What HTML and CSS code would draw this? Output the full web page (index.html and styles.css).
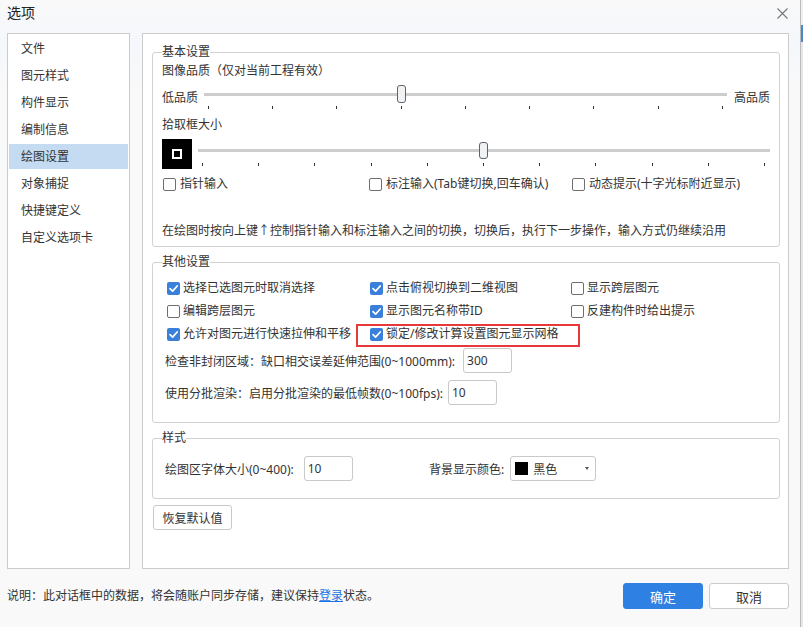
FILE: index.html
```html
<html lang="zh-CN">
<head>
    <meta charset="UTF-8">
    <meta name="viewport" content="width=device-width, initial-scale=1.0">
    <title>选项</title>
    <link rel="stylesheet" href="styles.css">
</head>
<body>
    <div class="dialog">
        <div class="titlebar">
            <span class="title">选项</span>
            <span class="close">
                <svg width="11" height="11" viewBox="0 0 11 11"><path d="M0.5 0.5 L10.5 10.5 M10.5 0.5 L0.5 10.5" stroke="#777" stroke-width="1.1" fill="none"/></svg>
            </span>
        </div>

        <div class="main">
            <ul class="nav">
                <li>文件</li>
                <li>图元样式</li>
                <li>构件显示</li>
                <li>编制信息</li>
                <li class="active">绘图设置</li>
                <li>对象捕捉</li>
                <li>快捷键定义</li>
                <li>自定义选项卡</li>
            </ul>

            <div class="content">
                <!-- 基本设置 -->
                <fieldset class="group basic">
                    <legend>基本设置</legend>
                    <div class="line first">图像品质（仅对当前工程有效）</div>
                    <div class="quality-row">
                        <span class="end-label">低品质</span>
                        <div class="slider q">
                            <div class="rail">
                                <span class="thumb" style="left: calc(4px + (100% - 8px) * 3 / 8 - 4.5px)"></span>
                            </div>
                            <div class="ticks">
                                <i></i><i></i><i></i><i></i><i></i><i></i><i></i><i></i><i></i>
                            </div>
                        </div>
                        <span class="end-label">高品质</span>
                    </div>

                    <div class="line second">拾取框大小</div>
                    <div class="pick-row">
                        <div class="pick-box"><span></span></div>
                        <div class="slider p">
                            <div class="rail">
                                <span class="thumb" style="left: calc(4px + (100% - 9px) * 5 / 10 - 4.5px)"></span>
                            </div>
                            <div class="ticks">
                                <i></i><i></i><i></i><i></i><i></i><i></i><i></i><i></i><i></i><i></i><i></i>
                            </div>
                        </div>
                    </div>

                    <div class="opts basic-opts">
                        <label class="opt"><span class="cb"></span>指针输入</label>
                        <label class="opt"><span class="cb"></span>标注输入(Tab键切换,回车确认)</label>
                        <label class="opt"><span class="cb"></span>动态提示(十字光标附近显示)</label>
                    </div>

                    <div class="line hint">在绘图时按向上键↑控制指针输入和标注输入之间的切换，切换后，执行下一步操作，输入方式仍继续沿用</div>
                </fieldset>

                <!-- 其他设置 -->
                <fieldset class="group other">
                    <legend>其他设置</legend>
                    <div class="opts other-opts">
                        <label class="opt"><span class="cb on"><svg viewBox="0 0 13 13"><path d="M3 6.6 L5.6 9.1 L10.2 4" /></svg></span>选择已选图元时取消选择</label>
                        <label class="opt"><span class="cb on"><svg viewBox="0 0 13 13"><path d="M3 6.6 L5.6 9.1 L10.2 4" /></svg></span>点击俯视切换到二维视图</label>
                        <label class="opt"><span class="cb"></span>显示跨层图元</label>
                        <label class="opt"><span class="cb"></span>编辑跨层图元</label>
                        <label class="opt"><span class="cb on"><svg viewBox="0 0 13 13"><path d="M3 6.6 L5.6 9.1 L10.2 4" /></svg></span>显示图元名称带ID</label>
                        <label class="opt"><span class="cb"></span>反建构件时给出提示</label>
                        <label class="opt"><span class="cb on"><svg viewBox="0 0 13 13"><path d="M3 6.6 L5.6 9.1 L10.2 4" /></svg></span>允许对图元进行快速拉伸和平移</label>
                        <label class="opt marked"><span class="cb on"><svg viewBox="0 0 13 13"><path d="M3 6.6 L5.6 9.1 L10.2 4" /></svg></span>锁定/修改计算设置图元显示网格</label>
                    </div>
                    <div class="field-row gap-check">
                        <span>检查非封闭区域：缺口相交误差延伸范围(0~1000mm):</span>
                        <input class="num" type="text" value="300">
                    </div>
                    <div class="field-row gap-render">
                        <span>使用分批渲染：启用分批渲染的最低帧数(0~100fps):</span>
                        <input class="num" type="text" value="10">
                    </div>
                </fieldset>

                <!-- 样式 -->
                <fieldset class="group style">
                    <legend>样式</legend>
                    <div class="style-row">
                        <div class="style-cell font-cell">
                            <span>绘图区字体大小(0~400):</span>
                            <input class="num" type="text" value="10">
                        </div>
                        <div class="style-cell color-cell">
                            <span>背景显示颜色:</span>
                            <div class="select">
                                <span class="swatch"></span>
                                <span>黑色</span>
                                <span class="caret"></span>
                            </div>
                        </div>
                    </div>
                </fieldset>

                <button class="reset">恢复默认值</button>
            </div>
        </div>

        <div class="footer">
            <p class="note">说明：此对话框中的数据，将会随账户同步存储，建议保持<a href="#">登录</a>状态。</p>
            <button class="btn primary">确定</button>
            <button class="btn">取消</button>
        </div>
    </div>
    <div class="edge"></div>
</body>
</html>
```

FILE: styles.css
```css
/* Options dialog */
body {
    margin: 0;
    padding: 0;
    width: 803px;
    height: 627px;
    overflow: hidden;
    display: flex;
    font-family: "Noto Sans", "Noto Sans CJK SC", sans-serif;
    font-size: 12px;
    color: #333;
    background-color: #ececec;
}

.dialog {
    box-sizing: border-box;
    width: 801px;
    height: 627px;
    display: flex;
    flex-direction: column;
    border-right: 1px solid #bcbcbc;
    background: linear-gradient(180deg, #f9f9f9 0, #f4f7fb 45px, #f9f9f9 90px, #f9f9f9 100%);
}

.edge {
    width: 2px;
    height: 627px;
    background: linear-gradient(180deg, #eef0f2 0, #eef0f2 25px, #4a86d0 25px, #4a86d0 42px, #e4e6e8 42px);
}

.titlebar {
    height: 33px;
    display: flex;
    align-items: flex-start;
    justify-content: space-between;
    padding: 0 12px 0 7px;
    box-sizing: border-box;
}

.title {
    font-size: 14px;
    line-height: 20px;
    margin-top: 3px;
    color: #222;
}

.close {
    margin-top: 8px;
    width: 11px;
    height: 11px;
    display: block;
}

.close svg {
    display: block;
}

.main {
    display: flex;
    height: 536px;
    padding: 0 11px 0 7px;
    gap: 12px;
}

/* left navigation */
.nav {
    box-sizing: border-box;
    width: 123px;
    margin: 0;
    padding: 2px 0 0 0;
    list-style-type: none;
    background-color: #fff;
    border: 1px solid #cbcbcb;
}

.nav li {
    height: 25px;
    line-height: 25px;
    margin: 0 1px 2px 1px;
    padding-left: 12px;
    color: #333;
}

.nav li.active {
    background-color: #c4dbf2;
}

/* right content */
.content {
    flex: 1;
    box-sizing: border-box;
    background-color: #fff;
    border: 1px solid #cbcbcb;
    padding: 10px 8px 0 9px;
}

.group {
    margin: 0;
    padding: 0 9px 7px 9px;
    border: 1px solid #d2d2d2;
    border-radius: 3px;
    min-width: 0;
}

.group legend {
    padding: 0;
    margin: 0;
    line-height: 16px;
    color: #333;
}

.line {
    line-height: 16px;
    white-space: nowrap;
}

.line.first {
    margin-top: 3px;
}

.line.second {
    margin-top: 8px;
}

.line.hint {
    margin-top: 31px;
}

/* sliders */
.quality-row {
    display: flex;
    align-items: flex-start;
    margin-top: 6px;
}

.end-label {
    line-height: 16px;
    margin-top: 5px;
}

.slider {
    flex: 1;
}

.slider.q {
    margin: 0 7px 0 6px;
}

.slider.p {
    margin: 3px 0 0 6px;
}

.rail {
    position: relative;
    height: 18px;
    background: linear-gradient(180deg, transparent 8px, #cdcdcd 8px, #cdcdcd 11px, transparent 11px);
}

.slider.p .rail {
    height: 17px;
    background: linear-gradient(180deg, transparent 7px, #cdcdcd 7px, #cdcdcd 10px, transparent 10px);
}

.thumb {
    position: absolute;
    top: 0;
    box-sizing: border-box;
    width: 9px;
    height: 100%;
    background-color: #f1f2f4;
    border: 1px solid #5d6470;
    border-radius: 3px;
}

.ticks {
    display: flex;
    justify-content: space-between;
    padding: 0 4px;
    margin-top: 3px;
}

.slider.p .ticks {
    padding: 0 5px 0 4px;
    margin-top: 4px;
}

.ticks i {
    display: block;
    width: 1px;
    height: 3px;
    background-color: #333;
}

.pick-row {
    display: flex;
    align-items: flex-start;
    margin-top: 6px;
}

.pick-box {
    width: 30px;
    height: 30px;
    background-color: #000;
    display: flex;
    align-items: center;
    justify-content: center;
}

.pick-box span {
    box-sizing: border-box;
    width: 10px;
    height: 10px;
    border: 2px solid #fff;
}

/* checkboxes */
.opts {
    display: grid;
}

.basic-opts {
    grid-template-columns: 206px 203px 1fr;
    margin-top: 7px;
    margin-left: 1px;
}

.other-opts {
    grid-template-columns: 203px 201px 1fr;
    row-gap: 7px;
    margin-top: 10px;
    margin-left: 5px;
}

.opt {
    display: flex;
    align-items: center;
    gap: 4px;
    line-height: 16px;
    white-space: nowrap;
    position: relative;
}

.other-opts .opt {
    gap: 3px;
}

.cb {
    box-sizing: border-box;
    width: 13px;
    height: 13px;
    border: 1px solid #6f6f6f;
    border-radius: 2px;
    background-color: #fff;
    flex-shrink: 0;
}

.cb.on {
    border: none;
    background-color: #3a80da;
}

.cb svg {
    display: block;
    width: 13px;
    height: 13px;
}

.cb svg path {
    fill: none;
    stroke: #fff;
    stroke-width: 1.7;
    stroke-linecap: round;
    stroke-linejoin: round;
}

.opt.marked::after {
    content: "";
    position: absolute;
    left: -14px;
    top: -2px;
    width: 224px;
    height: 23px;
    box-sizing: border-box;
    border: 2px solid #e8393a;
}

/* fields */
.other {
    margin-top: 7px;
    padding-bottom: 17px;
}

.field-row {
    display: flex;
    align-items: center;
    margin-left: 3px;
    white-space: nowrap;
}

.gap-check {
    margin-top: 6px;
    gap: 8px;
}

.gap-render {
    margin-top: 7px;
    gap: 5px;
}

.num {
    box-sizing: border-box;
    width: 49px;
    height: 25px;
    padding: 0 0 0 3px;
    border: 1px solid #c9c9c9;
    border-radius: 3px;
    font-family: "Noto Sans", "Noto Sans CJK SC", sans-serif;
    font-size: 12px;
    color: #333;
    background-color: #fff;
    outline: none;
}

.style {
    margin-top: 7px;
    padding-bottom: 17px;
}

.style-row {
    display: flex;
    margin-top: 10px;
    margin-left: 3px;
}

.style-cell {
    display: flex;
    align-items: center;
    white-space: nowrap;
}

.font-cell {
    width: 264px;
    gap: 10px;
}

.color-cell {
    gap: 6px;
}

.select {
    box-sizing: border-box;
    width: 86px;
    height: 25px;
    display: flex;
    align-items: center;
    padding: 0 6px 0 4px;
    border: 1px solid #c9c9c9;
    border-radius: 3px;
    background-color: #fff;
}

.swatch {
    width: 13px;
    height: 13px;
    background-color: #000;
    margin-right: 5px;
}

.caret {
    margin-left: auto;
    width: 0;
    height: 0;
    border-left: 2.5px solid transparent;
    border-right: 2.5px solid transparent;
    border-top: 3px solid #555;
}

button {
    font-family: "Noto Sans", "Noto Sans CJK SC", sans-serif;
    cursor: pointer;
}

.reset {
    display: block;
    margin-top: 6px;
    margin-left: 1px;
    box-sizing: border-box;
    width: 79px;
    height: 25px;
    padding: 0;
    font-size: 12px;
    color: #333;
    background-color: #fff;
    border: 1px solid #c9c9c9;
    border-radius: 3px;
}

/* footer */
.footer {
    flex: 1;
    display: flex;
    align-items: center;
    padding: 0 11px 4px 7px;
}

.note {
    margin: 0;
    line-height: 16px;
    color: #333;
}

.note a {
    color: #1b74e4;
    text-decoration: underline;
}

.btn {
    box-sizing: border-box;
    width: 80px;
    height: 26px;
    padding: 0;
    font-size: 13px;
    color: #333;
    background-color: #fff;
    border: 1px solid #cacaca;
    border-radius: 3px;
    margin-left: 6px;
}

.btn.primary {
    margin-left: auto;
    color: #fff;
    background-color: #2e80e2;
    border-color: #2e80e2;
}
```
